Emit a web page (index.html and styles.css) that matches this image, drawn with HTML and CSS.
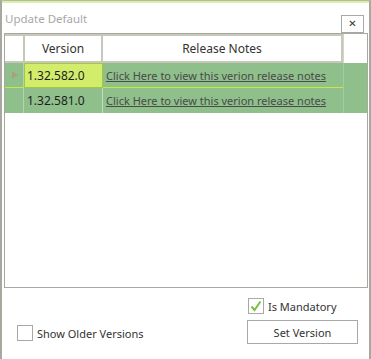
FILE: index.html
```html
<!DOCTYPE html>
<html>

<head>
    <title>Update Default</title>
    <link rel="stylesheet" href="styles.css">
</head>

<body>
    <div class="window">
        <div class="titlebar">
            <span class="title">Update Default</span>
            <button class="close-btn">&#x2715;</button>
        </div>

        <div class="grid">
            <div class="grid-row header">
                <div class="cell rowhead"></div>
                <div class="cell col-version">Version</div>
                <div class="cell col-notes">Release Notes</div>
                <div class="cell filler"></div>
            </div>
            <div class="grid-row data">
                <div class="cell rowhead"><span class="arrow"></span></div>
                <div class="cell col-version current">1.32.582.0</div>
                <div class="cell col-notes"><a href="#">Click Here to view this verion release notes</a></div>
                <div class="cell filler"></div>
            </div>
            <div class="grid-row data">
                <div class="cell rowhead"></div>
                <div class="cell col-version">1.32.581.0</div>
                <div class="cell col-notes"><a href="#">Click Here to view this verion release notes</a></div>
                <div class="cell filler"></div>
            </div>
        </div>

        <div class="footer">
            <label class="check older">
                <span class="box"></span>
                Show Older Versions
            </label>
            <div class="actions">
                <label class="check">
                    <span class="box">
                        <svg width="14" height="14" viewBox="0 0 14 14">
                            <path d="M2.5 7.5 L5.5 11 L11.5 2.5" fill="none" stroke="#7cc040" stroke-width="2"/>
                        </svg>
                    </span>
                    Is Mandatory
                </label>
                <button class="set-btn">Set Version</button>
            </div>
        </div>
    </div>
</body>
</html>
```

FILE: styles.css
```css
body {
    margin: 0;
    font-family: "Noto Sans", "Open Sans", sans-serif;
    font-size: 11px;
    color: #333;
    background-color: #ffffff;
}

.window {
    width: 371px;
    height: 359px;
    box-sizing: border-box;
    border-top: 1px solid #b8b8ac;
    border-left: 2px solid #a8a8a0;
    border-right: 2px solid #a8a8a0;
}

.window::before {
    content: "";
    display: block;
    height: 2px;
    background-color: #d8f2a0;
}

.titlebar {
    display: flex;
    justify-content: space-between;
    height: 30px;
}

.title {
    color: #a8a8a8;
    padding-left: 3px;
    padding-top: 8px;
    line-height: 16px;
    font-size: 11.5px;
}

.close-btn {
    width: 23px;
    height: 18px;
    margin-top: 12px;
    margin-right: 5px;
    padding: 0;
    border: 1px solid #a8a8a8;
    background-color: #fff;
    color: #333;
    font-size: 10px;
    font-weight: bold;
    font-family: "DejaVu Sans", sans-serif;
    line-height: 14px;
}

.grid {
    margin-left: 2px;
    width: 364px;
    height: 255px;
    box-sizing: border-box;
    border: 1px solid #a8a8a0;
}

.grid-row {
    display: grid;
    grid-template-columns: 19px 79px 240px 1fr;
}

.cell {
    box-sizing: border-box;
    display: flex;
    align-items: center;
    white-space: nowrap;
}

.header .cell {
    height: 29px;
    background-color: #fff;
    justify-content: center;
    color: #333;
    font-size: 12px;
    border: 2px solid #c8c8ba;
    border-left: 0;
}

.header .rowhead {
    border-left: 0;
    border-right: 1px solid #c8c8ba;
}

.header .col-version {
    border-left: 1px solid #c8c8ba;
}

.header .filler {
    border: 0;
    border-left: 1px solid #d4d4cc;
}

.data .cell {
    height: 25px;
    background-color: #8fbf8a;
    color: #1e1e1e;
    font-size: 12px;
    border-bottom: 1px solid #c8e840;
    padding-left: 3px;
}

.data .rowhead {
    border-right: 1px solid #b4d4b0;
}

.data .col-version {
    border-right: 1px solid #c4dcc0;
}

.data .filler {
    border-bottom: 0;
    border-left: 1px solid #a4cca0;
}

.data + .data .cell {
    border-bottom: 0;
}

.data .current {
    background-color: #d2ec6c;
    border: 1px solid #a4c640;
    padding-left: 2px;
}

.arrow {
    width: 0;
    height: 0;
    margin-left: 4px;
    border-top: 4px solid transparent;
    border-bottom: 4px solid transparent;
    border-left: 6px solid #a4a47c;
}

.col-notes a {
    color: #4a4a4a;
    text-decoration: underline;
    font-size: 11px;
}

.footer {
    display: flex;
    justify-content: space-between;
    align-items: flex-end;
    padding: 10px 11px 0 15px;
}

.check {
    display: flex;
    align-items: center;
    gap: 4px;
    color: #333;
}

.box {
    width: 14px;
    height: 14px;
    border: 1px solid #a8a8a8;
    display: flex;
}

.older {
    margin-bottom: 3px;
}

.actions {
    display: flex;
    flex-direction: column;
    width: 111px;
}

.actions .check {
    margin-left: 1px;
    margin-bottom: 6px;
}

.set-btn {
    height: 24px;
    border: 1px solid #a8a8a8;
    background-color: #fff;
    font-family: "Noto Sans", "Open Sans", sans-serif;
    font-size: 11px;
    color: #333;
    padding: 0;
}
```
